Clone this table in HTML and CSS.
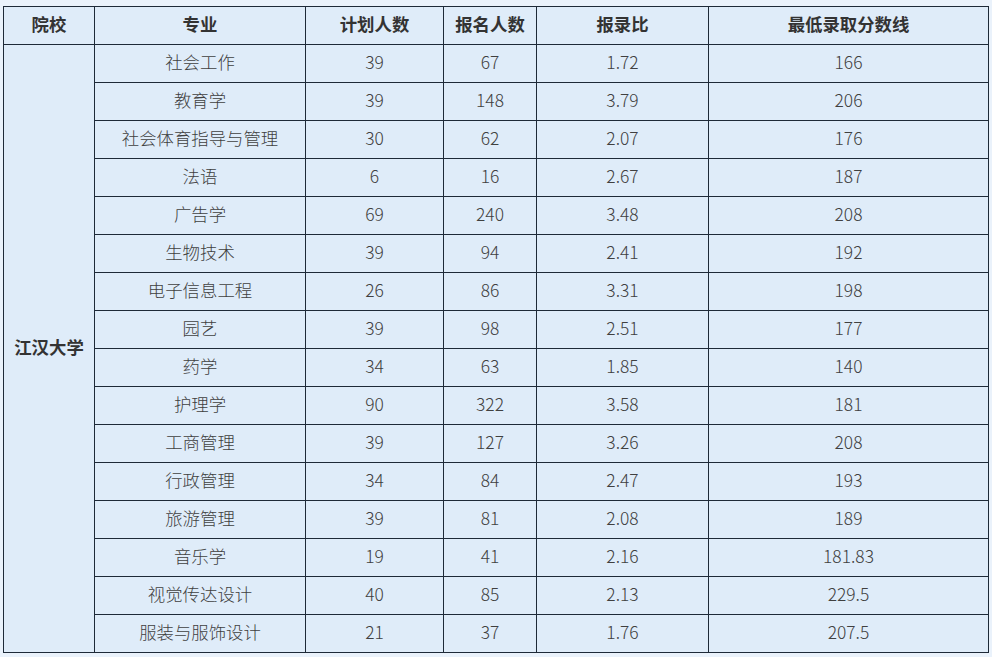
FILE: index.html
```html
<!DOCTYPE html>
<html lang="zh-CN">
<head>
<meta charset="utf-8">
<title>江汉大学</title>
<link rel="stylesheet" href="styles.css">
</head>
<body>
<div class="wrap">
<table class="score">
<colgroup>
<col class="c1"><col class="c2"><col class="c3"><col class="c4"><col class="c5"><col class="c6">
</colgroup>
<thead>
<tr><th>院校</th><th>专业</th><th>计划人数</th><th>报名人数</th><th>报录比</th><th>最低录取分数线</th></tr>
</thead>
<tbody>
<tr><td class="school" rowspan="16">江汉大学</td><td>社会工作</td><td>39</td><td>67</td><td>1.72</td><td>166</td></tr>
<tr><td>教育学</td><td>39</td><td>148</td><td>3.79</td><td>206</td></tr>
<tr><td>社会体育指导与管理</td><td>30</td><td>62</td><td>2.07</td><td>176</td></tr>
<tr><td>法语</td><td>6</td><td>16</td><td>2.67</td><td>187</td></tr>
<tr><td>广告学</td><td>69</td><td>240</td><td>3.48</td><td>208</td></tr>
<tr><td>生物技术</td><td>39</td><td>94</td><td>2.41</td><td>192</td></tr>
<tr><td>电子信息工程</td><td>26</td><td>86</td><td>3.31</td><td>198</td></tr>
<tr><td>园艺</td><td>39</td><td>98</td><td>2.51</td><td>177</td></tr>
<tr><td>药学</td><td>34</td><td>63</td><td>1.85</td><td>140</td></tr>
<tr><td>护理学</td><td>90</td><td>322</td><td>3.58</td><td>181</td></tr>
<tr><td>工商管理</td><td>39</td><td>127</td><td>3.26</td><td>208</td></tr>
<tr><td>行政管理</td><td>34</td><td>84</td><td>2.47</td><td>193</td></tr>
<tr><td>旅游管理</td><td>39</td><td>81</td><td>2.08</td><td>189</td></tr>
<tr><td>音乐学</td><td>19</td><td>41</td><td>2.16</td><td>181.83</td></tr>
<tr><td>视觉传达设计</td><td>40</td><td>85</td><td>2.13</td><td>229.5</td></tr>
<tr><td>服装与服饰设计</td><td>21</td><td>37</td><td>1.76</td><td>207.5</td></tr>
</tbody>
</table>
</div>
</body>
</html>
```
FILE: styles.css
```css
html, body {
  margin: 0;
  padding: 0;
  background: #eaf2fb;
}
.wrap {
  padding: 6px 0 0 3px;
}
.score {
  border-collapse: collapse;
  table-layout: fixed;
  width: 985px;
  background: #dfecf9;
  font-family: "Noto Sans CJK SC", "Noto Sans", sans-serif;
  font-size: 17.4px;
  font-weight: 300;
  color: #404040;
}
.c1 { width: 91px; }
.c2 { width: 211px; }
.c3 { width: 138px; }
.c4 { width: 93px; }
.c5 { width: 172px; }
.c6 { width: 280px; }
.score tr {
  height: 38px;
}
.score th, .score td {
  border: 1px solid #1e2a38;
  padding: 0 0 3px 0;
  text-align: center;
  vertical-align: middle;
  line-height: 1;
}
.score th {
  font-weight: 700;
  color: #333;
}
.score td.school {
  font-weight: 700;
  color: #333;
}
```
